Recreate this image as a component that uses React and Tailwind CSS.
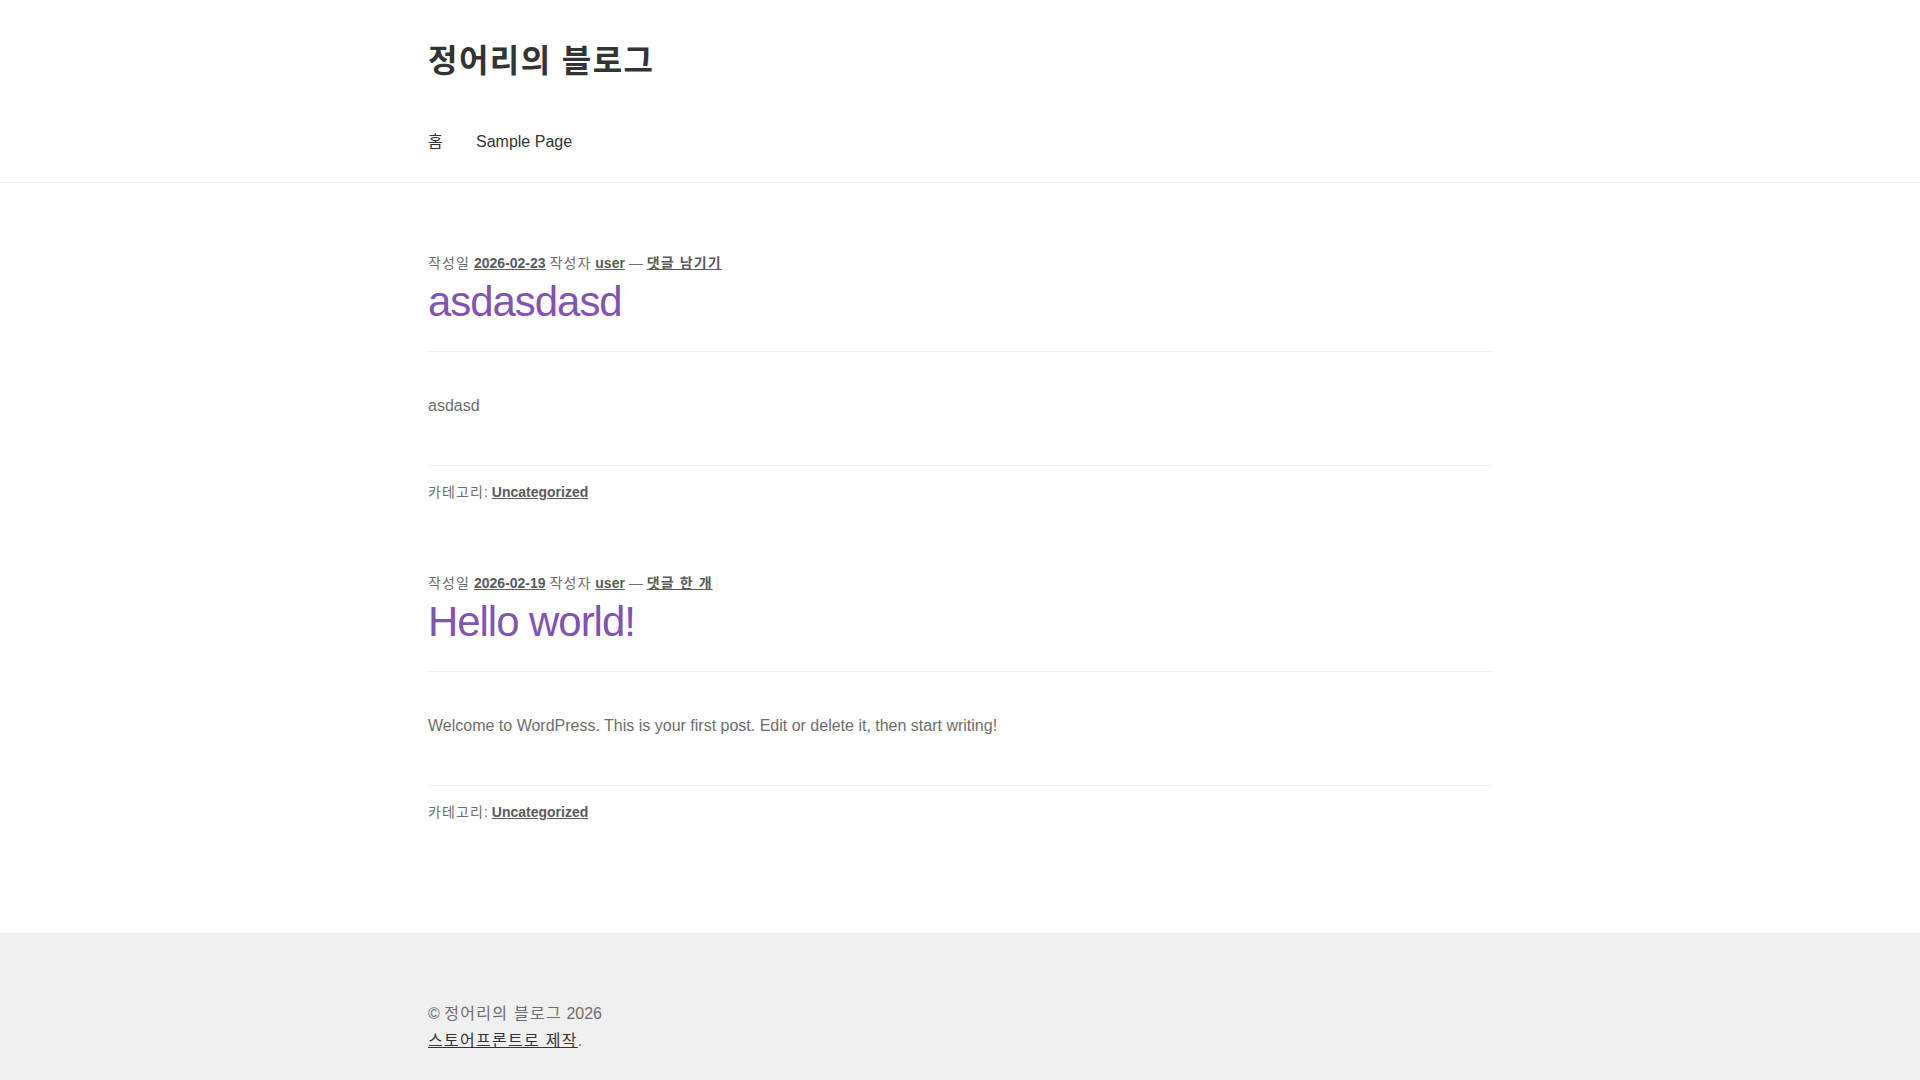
import React from "react";

const font = { fontFamily: '"Liberation Sans", "Noto Sans CJK KR", sans-serif' };

// hangul in the reference sits on a full em, ours is a bit narrower
const K = ({ children }) => <span className="tracking-[0.08em]">{children}</span>;

const posts = [
  {
    date: "2026-02-23",
    comments: "댓글 남기기",
    title: "asdasdasd",
    body: "asdasd",
  },
  {
    date: "2026-02-19",
    comments: "댓글 한 개",
    title: "Hello world!",
    body: "Welcome to WordPress. This is your first post. Edit or delete it, then start writing!",
  },
];

const Post = ({ post }) => (
  <article className="pt-[70px] first:pt-0">
    {/* entry header */}
    <header className="border-b border-[#eeeeee] pb-[24px]">
      <div className="text-[14px] leading-[21px] text-[#6d6d6d]">
        <K>작성일</K>{" "}
        <a href="#" className="font-bold underline text-[#5a5a5a]">
          {post.date}
        </a>{" "}
        <K>작성자</K>{" "}
        <a href="#" className="font-bold underline text-[#5a5a5a]">
          user
        </a>{" "}
        —{" "}
        <a href="#" className="font-bold underline text-[#5a5a5a]">
          <K>{post.comments}</K>
        </a>
      </div>
      <h2 className="mt-[2px] text-[41.9px] leading-[51px] tracking-[-1px] font-light text-[#7f54b3]">
        <a href="#">{post.title}</a>
      </h2>
    </header>

    <div className="pt-[41px] pb-[46px] text-[16px] leading-[26px] text-[#6d6d6d]">
      <p>{post.body}</p>
    </div>

    {/* categories */}
    <footer className="border-t border-[#eeeeee] pt-[16px] text-[14px] leading-[21px] text-[#6d6d6d]">
      <K>카테고리</K>:{" "}
      <a href="#" className="font-bold underline text-[#5a5a5a]">
        Uncategorized
      </a>
    </footer>
  </article>
);

export default function App() {
  return (
    <div className="min-h-screen bg-white" style={font}>
      {/* site header */}
      <header className="border-b border-[#f0f0f0]">
        <div className="mx-auto w-[1064px]">
          <div className="h-[124px] flex items-center">
            <h1 className="text-[32px] leading-[40px] font-bold text-[#333333] tracking-[0.045em] -mt-[2px]">
              <a href="#">정어리의 블로그</a>
            </h1>
          </div>
          <nav className="h-[58px] flex items-start pt-[1px]">
            <ul className="flex text-[16px] leading-[34px] text-[#333333]">
              <li className="pr-[16px]">
                <a href="#">
                  <K>홈</K>
                </a>
              </li>
              <li className="px-[16px]">
                <a href="#">Sample Page</a>
              </li>
            </ul>
          </nav>
        </div>
      </header>

      {/* posts */}
      <main className="mx-auto w-[1064px] pt-[70px] pb-[110px]">
        {posts.map((p) => (
          <Post key={p.date} post={p} />
        ))}
      </main>

      {/* footer */}
      <footer className="bg-[#f0f0f0]">
        <div className="mx-auto w-[1064px] pt-[67px] pb-[60px] text-[16px] leading-[27px] text-[#6d6d6d]">
          <div>
            © <K>정어리의 블로그</K> 2026
          </div>
          <div>
            <a href="#" className="underline text-[#333333]">
              <K>스토어프론트로 제작</K>
            </a>
            .
          </div>
        </div>
      </footer>
    </div>
  );
}
